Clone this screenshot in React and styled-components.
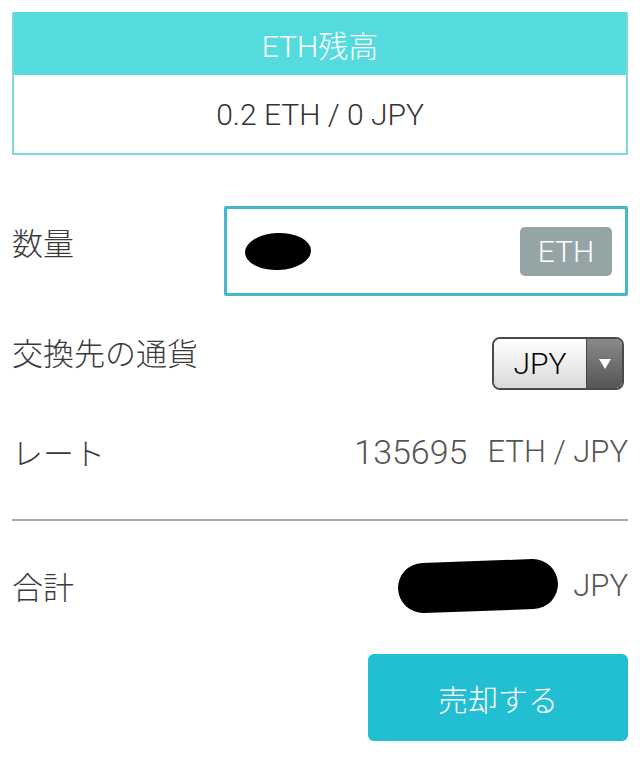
import React from 'react'
import styled, { createGlobalStyle } from 'styled-components'

const GlobalStyle = createGlobalStyle`
  html, body {
    margin: 0;
    padding: 0;
    background: #fff;
  }
  body {
    font-family: "Roboto", "Noto Sans CJK JP", sans-serif;
    font-weight: 300;
    color: #333;
  }
`

const Page = styled.div`
  width: 640px;
  box-sizing: border-box;
  padding: 12px 12px 0 12px;
`

// 残高カード
const BalanceCard = styled.div`
  border: 2px solid #80d8dc;
  border-top: none;
`

const BalanceHeader = styled.div`
  height: 63px;
  background: #55dbde;
  color: #fff;
  font-size: 30px;
  display: flex;
  align-items: center;
  justify-content: center;
`

const BalanceBody = styled.div`
  height: 78px;
  display: flex;
  align-items: center;
  justify-content: center;
  font-size: 30px;
  color: #333;
`

const Row = styled.div`
  display: flex;
  justify-content: space-between;
  align-items: ${(props) => props.align || 'center'};
  margin-top: ${(props) => props.gap || 0}px;
  min-height: ${(props) => props.h || 36}px;
`

const Label = styled.span`
  font-family: "Noto Sans CJK JP", sans-serif;
  font-weight: 300;
  font-size: 31px;
  line-height: 36px;
  color: #3a3a3a;
  padding-top: ${(props) => props.top || 0}px;
`

// 数量入力
const AmountInput = styled.div`
  width: 404px;
  height: 90px;
  box-sizing: border-box;
  border: 3px solid #45b9c7;
  border-radius: 2px;
  display: flex;
  align-items: center;
  justify-content: space-between;
  padding: 0 13px 0 18px;
  box-shadow: inset 0 1px 3px rgba(0, 0, 0, 0.08);
`

const Blot = styled.span`
  display: inline-block;
  width: ${(props) => props.w}px;
  height: ${(props) => props.h}px;
  background: #000;
  border-radius: 50%;
  transform: rotate(-2deg);
`

const UnitBadge = styled.span`
  width: 92px;
  height: 49px;
  border-radius: 5px;
  background: #95a5a6;
  color: #fff;
  font-size: 30px;
  display: flex;
  align-items: center;
  justify-content: center;
`

// 通貨セレクト
const Select = styled.div`
  width: 132px;
  height: 53px;
  box-sizing: border-box;
  margin: 3px 4px 0 0;
  border: 2px solid #4a4a4a;
  border-radius: 8px;
  overflow: hidden;
  display: flex;
`

const SelectValue = styled.span`
  flex: 1;
  background: linear-gradient(#ffffff, #d9d9d9);
  color: #000;
  font-weight: 300;
  font-size: 30px;
  display: flex;
  align-items: center;
  justify-content: center;
`

const SelectArrow = styled.span`
  width: 35px;
  background: linear-gradient(#8a8a8a, #555);
  border-left: 1px solid #444;
  display: flex;
  align-items: center;
  justify-content: center;
`

const Value = styled.span`
  display: flex;
  align-items: center;
  line-height: 36px;
  color: #555;
`

const RateNumber = styled.span`
  font-size: 34px;
  margin-right: 20px;
`

const Unit = styled.span`
  font-size: 31px;
  color: #555;
`

const Divider = styled.hr`
  border: none;
  height: 2px;
  background: #aaa;
  margin: 49px 0 0 0;
`

const SellButton = styled.button`
  display: block;
  margin: 43px 0 0 auto;
  width: 260px;
  height: 87px;
  border: none;
  border-radius: 6px;
  background: #22bfd2;
  color: #fff;
  font-family: "Noto Sans CJK JP", sans-serif;
  font-weight: 300;
  font-size: 30px;
  cursor: pointer;
`

export default function App() {
  return (
    <Page>
      <GlobalStyle />
      <BalanceCard>
        <BalanceHeader>ETH残高</BalanceHeader>
        <BalanceBody>0.2 ETH / 0 JPY</BalanceBody>
      </BalanceCard>

      <Row gap={51} h={90} align="flex-start">
        <Label top={18}>数量</Label>
        <AmountInput>
          <Blot w={66} h={37} />
          <UnitBadge>ETH</UnitBadge>
        </AmountInput>
      </Row>

      <Row gap={38} h={56} align="flex-start">
        <Label>交換先の通貨</Label>
        <Select>
          <SelectValue>JPY</SelectValue>
          <SelectArrow>
            <svg width="14" height="12" viewBox="0 0 14 12">
              <path d="M1 1 L13 1 L7 11 Z" fill="#fff" />
            </svg>
          </SelectArrow>
        </Select>
      </Row>

      <Row gap={44}>
        <Label>レート</Label>
        <Value>
          <RateNumber>135695</RateNumber>
          <Unit>ETH / JPY</Unit>
        </Value>
      </Row>

      <Divider />

      <Row gap={40} h={50}>
        <Label>合計</Label>
        <Value>
          <Blot w={160} h={50} style={{ borderRadius: '26px', marginRight: 15 }} />
          <Unit>JPY</Unit>
        </Value>
      </Row>

      <SellButton>売却する</SellButton>
    </Page>
  )
}
